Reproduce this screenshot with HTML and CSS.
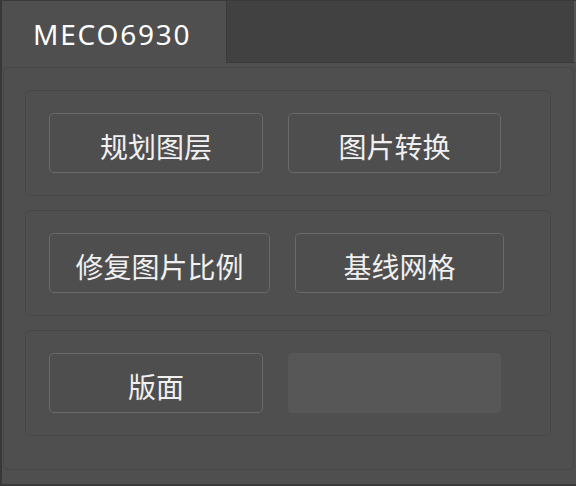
FILE: index.html
```html
<!DOCTYPE html>
<html lang="zh-CN">
<head>
<meta charset="utf-8">
<title>MECO6930</title>
<link rel="stylesheet" href="styles.css">
</head>
<body>
<div class="window">
  <div class="tabbar">
    <div class="tab">MECO6930</div>
    <div class="tab-rest"></div>
  </div>
  <div class="panel">
    <div class="group">
      <button class="btn w214">规划图层</button>
      <button class="btn w213">图片转换</button>
    </div>
    <div class="group">
      <button class="btn w221">修复图片比例</button>
      <button class="btn w209">基线网格</button>
    </div>
    <div class="group">
      <button class="btn w214">版面</button>
      <div class="placeholder w213"></div>
    </div>
  </div>
</div>
</body>
</html>
```
FILE: styles.css
```css
html, body {
  margin: 0;
  padding: 0;
}
body {
  width: 576px;
  height: 486px;
  overflow: hidden;
  background: #4f4f4f;
  font-family: "Noto Sans", "Noto Sans CJK SC", sans-serif;
}
.window {
  box-sizing: border-box;
  height: 486px;
  border-left: 2px solid #383838;
  border-top: 1px solid #3a3a3a;
  border-bottom: 2px solid #3a3a3a;
  display: flex;
  flex-direction: column;
}
.tabbar {
  display: flex;
  height: 62px;
  flex: none;
}
.tab {
  box-sizing: border-box;
  width: 224px;
  padding-left: 31px;
  padding-top: 4px;
  display: flex;
  align-items: center;
  color: #ffffff;
  font-size: 28px;
  letter-spacing: 1.8px;
}
.tab-rest {
  flex: 1;
  background: #414141;
  border-left: 1px solid #3a3a3a;
  border-bottom: 1px solid #393939;
  border-right: 2px solid #555555;
}
.panel {
  flex: 1;
  margin: 4px 2px 14px 1px;
  border: 1px solid #474747;
  border-radius: 5px;
  padding: 22px 22px 0 21px;
  display: flex;
  flex-direction: column;
  gap: 14px;
}
.group {
  box-sizing: border-box;
  height: 106px;
  border: 1px solid #464646;
  border-radius: 5px;
  padding: 22px 0 0 23px;
  display: flex;
  gap: 25px;
}
.btn {
  box-sizing: border-box;
  height: 60px;
  margin: 0;
  padding: 5px 0 0 0;
  border: 1px solid #6a6a6a;
  border-radius: 5px;
  background: #4e4e4e;
  color: #f0f0f0;
  font-family: "Noto Sans CJK SC", sans-serif;
  font-size: 28px;
  display: flex;
  align-items: center;
  justify-content: center;
}
.placeholder {
  height: 60px;
  border-radius: 4px;
  background: #575757;
}
.w209 { width: 209px; }
.w213 { width: 213px; }
.w214 { width: 214px; }
.w221 { width: 221px; }
```
